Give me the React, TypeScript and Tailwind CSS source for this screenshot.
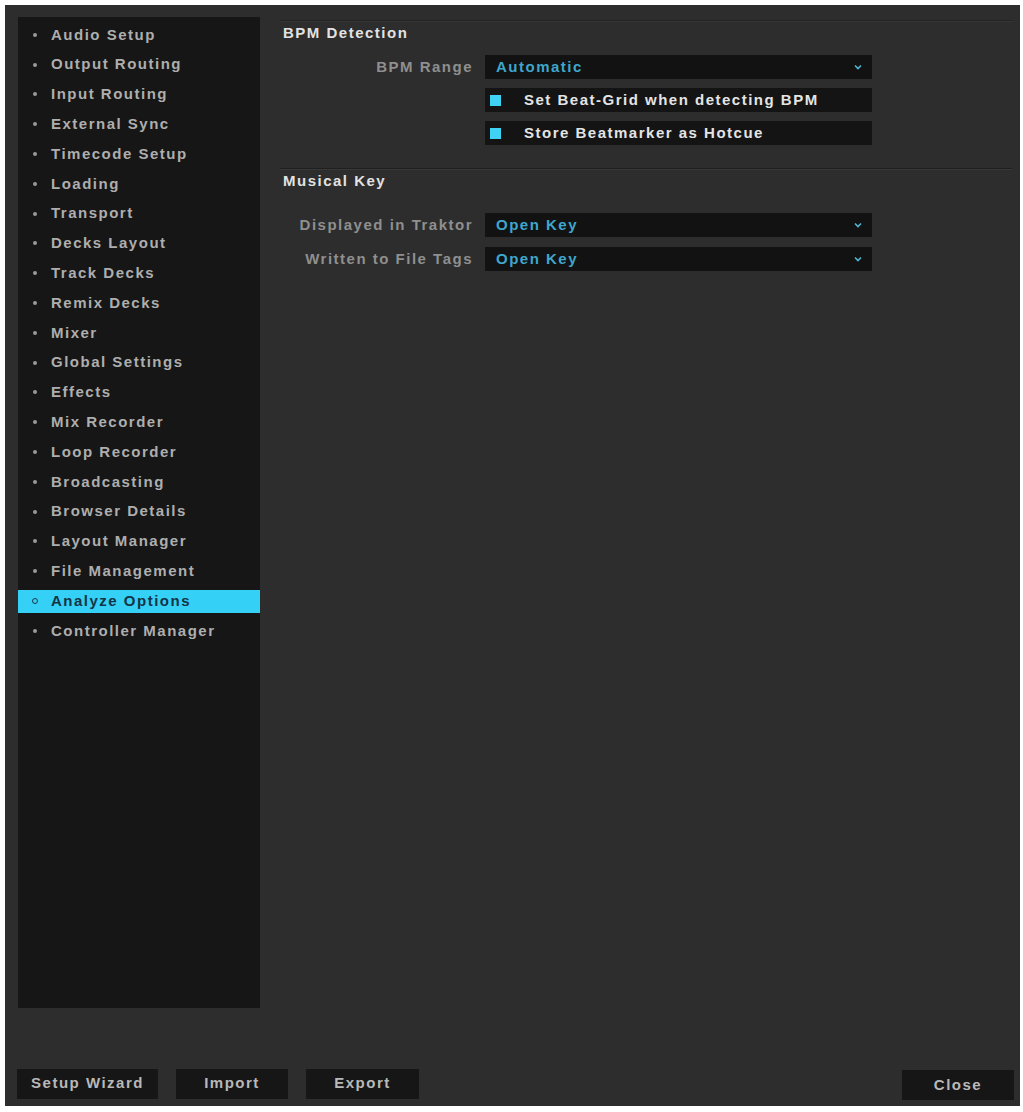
import React from "react";

const items = [
  "Audio Setup",
  "Output Routing",
  "Input Routing",
  "External Sync",
  "Timecode Setup",
  "Loading",
  "Transport",
  "Decks Layout",
  "Track Decks",
  "Remix Decks",
  "Mixer",
  "Global Settings",
  "Effects",
  "Mix Recorder",
  "Loop Recorder",
  "Broadcasting",
  "Browser Details",
  "Layout Manager",
  "File Management",
  "Analyze Options",
  "Controller Manager",
];

const font = { fontFamily: '"Liberation Sans", Arial, sans-serif' };

function Chevron() {
  return (
    <svg width="8" height="6" viewBox="0 0 8 6" className="shrink-0">
      <path d="M1 1.5 L4 4.5 L7 1.5" fill="none" stroke="#4fb6d4" strokeWidth="1.6" />
    </svg>
  );
}

function Dropdown({ value }: { value: string }) {
  return (
    <div className="w-[387px] h-[24px] bg-[#121212] flex items-center justify-between pl-[11px] pr-[10px]">
      <span className="text-[#3fa6cc] font-bold text-[15px] tracking-[1.5px]">{value}</span>
      <Chevron />
    </div>
  );
}

function Check({ label }: { label: string }) {
  return (
    <div className="w-[387px] h-[24px] bg-[#141414] flex items-center pl-[5px]">
      <div className="w-[11px] h-[11px] bg-[#3fd2f4]" />
      <span className="ml-[23px] text-[#e4e4e4] font-bold text-[15px] tracking-[1.5px]">{label}</span>
    </div>
  );
}

function Row({ label, children }: { label?: string; children: React.ReactNode }) {
  return (
    <div className="flex items-center">
      <div className="w-[205px] pr-[12px] text-right text-[#8f8f8f] font-bold text-[15px] tracking-[1.5px] whitespace-nowrap">
        {label}
      </div>
      {children}
    </div>
  );
}

function Btn({ label, w }: { label: string; w: string }) {
  return (
    <div className={`${w} h-[30px] bg-[#161616] flex items-center justify-center text-[#b9b9b9] font-bold text-[15px] tracking-[1.5px]`}>
      {label}
    </div>
  );
}

export default function App() {
  return (
    <div className="w-[1023px] h-[1112px] bg-white pt-[5px] pl-[5px]" style={font}>
      <div className="w-[1015px] h-[1101px] bg-[#2d2d2d] flex flex-col">
        <div className="flex pt-[12px] pl-[13px]">
          <div className="w-[242px] h-[991px] bg-[#161616] pt-[3px]">
            {items.map((it) => {
              const active = it === "Analyze Options";
              return (
                <div key={it} className="h-[29.8px] flex items-center">
                  <div
                    className={`w-full h-[23px] flex items-center ${active ? "bg-[#35d0f5]" : ""}`}
                  >
                    <div className="w-[33px] flex justify-center">
                      {active ? (
                        <div className="w-[6px] h-[6px] rounded-full border-[1.5px] border-[#1a3a4a]" />
                      ) : (
                        <div className="w-[4px] h-[4px] rounded-full bg-[#9a9a9a]" />
                      )}
                    </div>
                    <span
                      className={`text-[15px] font-bold tracking-[1.5px] whitespace-nowrap ${
                        active ? "text-[#143447]" : "text-[#aeaeae]"
                      }`}
                    >
                      {it}
                    </span>
                  </div>
                </div>
              );
            })}
          </div>
          <div className="ml-[20px] w-[732px] pt-[3px]">
            <div className="h-px bg-[#232323]" />
            <div className="h-px bg-[#363636]" />
            <div className="pl-[3px] h-[22px] flex items-center text-[#e2e2e2] font-bold text-[15px] tracking-[1.5px]">
              BPM Detection
            </div>
            <div className="flex flex-col gap-[9px] mt-[11px]">
              <Row label="BPM Range">
                <Dropdown value="Automatic" />
              </Row>
              <Row>
                <Check label="Set Beat-Grid when detecting BPM" />
              </Row>
              <Row>
                <Check label="Store Beatmarker as Hotcue" />
              </Row>
            </div>
            <div className="mt-[23px] h-px bg-[#1f1f1f]" />
            <div className="h-px bg-[#383838]" />
            <div className="pl-[3px] h-[22px] flex items-center text-[#e2e2e2] font-bold text-[15px] tracking-[1.5px]">
              Musical Key
            </div>
            <div className="flex flex-col gap-[10px] mt-[21px]">
              <Row label="Displayed in Traktor">
                <Dropdown value="Open Key" />
              </Row>
              <Row label="Written to File Tags">
                <Dropdown value="Open Key" />
              </Row>
            </div>
          </div>
        </div>
        <div className="mt-[59px] flex items-center pl-[12px] pr-[6px]">
          <div className="flex gap-[18px]">
            <Btn label="Setup Wizard" w="w-[141px]" />
            <Btn label="Import" w="w-[112px]" />
            <Btn label="Export" w="w-[113px]" />
          </div>
          <div className="ml-auto mt-[3px]">
            <Btn label="Close" w="w-[112px]" />
          </div>
        </div>
      </div>
    </div>
  );
}
